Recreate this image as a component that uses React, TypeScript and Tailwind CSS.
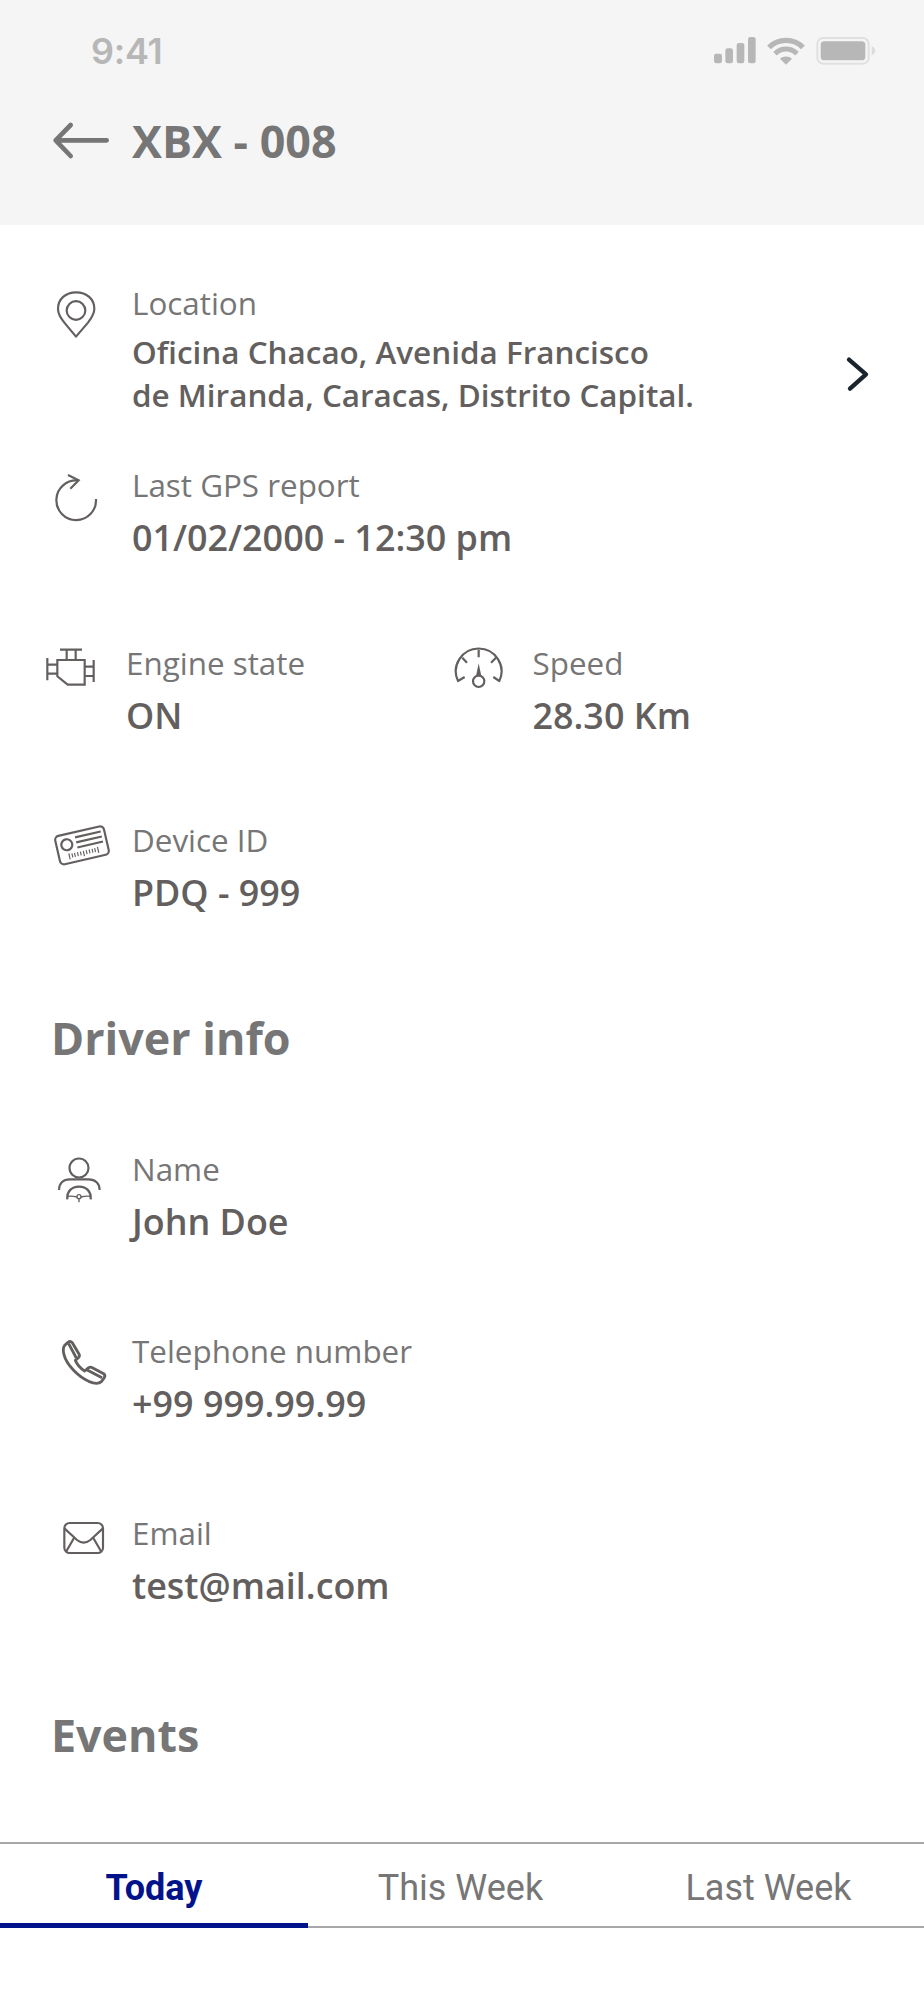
import React, { useState } from 'react';

type IconProps = { className?: string };

/* ---------- Icons ---------- */

const SignalIcon = () => (
  <svg className="w-[42px] h-[27px]" viewBox="0 0 126 81" fill="#b7b7b7">
    <rect x="0" y="50" width="24" height="29" rx="7" />
    <rect x="34" y="34" width="23" height="45" rx="7" />
    <rect x="68" y="18" width="23" height="61" rx="7" />
    <rect x="102" y="0" width="23" height="79" rx="7" />
  </svg>
);

const WifiIcon = () => (
  <svg className="w-[38px] h-[28px] ml-[11px]" viewBox="0 0 114 84" fill="none" stroke="#b7b7b7">
    <path d="M6 31C34 3 80 3 108 31" strokeWidth="16" />
    <path d="M24 50C43 31 71 31 90 50" strokeWidth="15" />
    <path d="M57 83L39 65C49 56 65 56 75 65Z" fill="#b7b7b7" stroke="none" />
  </svg>
);

const BatteryIcon = () => (
  <svg className="w-[60px] h-[28px] ml-[11px]" viewBox="0 0 180 84" fill="none">
    <rect x="4" y="3" width="154" height="77" rx="18" stroke="#e0e0e0" strokeWidth="6" />
    <rect x="14" y="13" width="134" height="57" rx="11" fill="#b7b7b7" />
    <path d="M167 28C174 31 178 36 178 41S174 52 167 55Z" fill="#dcdcdc" />
  </svg>
);

const BackIcon = () => (
  <svg className="w-[61px] h-[40px]" viewBox="0 0 183 120" fill="none" stroke="#767676" strokeWidth="14" strokeLinecap="round" strokeLinejoin="round">
    <path d="M176 58H23M68 12L23 58L68 105" />
  </svg>
);

const PinIcon = ({ className }: IconProps) => (
  <svg className={className} viewBox="0 0 135 162" fill="none" stroke="#635f5e" strokeWidth="6.5">
    <path d="M66 146L31 104C18 88 12 77 12 63C12 33 35 13 66.5 13S121 33 121 63C121 77 114 88 102 104Z" strokeLinejoin="round" />
    <circle cx="66" cy="67.500" r="28" />
  </svg>
);

const ReloadIcon = ({ className }: IconProps) => (
  <svg className={className} viewBox="0 0 135 162" fill="none" stroke="#635f5e" strokeWidth="6.5">
    <path d="M126 84A59.500 59.500 0 1 1 73 28.500" />
    <path d="M42 12L74 28L49 53" />
  </svg>
);

const EngineIcon = ({ className }: IconProps) => (
  <svg className={className} viewBox="0 0 162 135" fill="none" stroke="#635f5e" strokeWidth="6.5">
    <path d="M40 45H122V119H71L40 94Z" />
    <path d="M48 14H114M68 14V45M95 14V45" />
    <path d="M10 39V106M10 59H40M10 86H40" />
    <path d="M149 45V111M122 65H149M122 93H149" />
  </svg>
);

const SpeedIcon = ({ className }: IconProps) => (
  <svg className={className} viewBox="0 0 162 144" fill="none" stroke="#635f5e" strokeWidth="6.5">
    <path d="M38 96L18 108A68.500 68.500 0 1 1 142 108L124 96" strokeLinejoin="round" />
    <path d="M80 14V37M31 38L45 53M132 38L117 53" />
    <circle cx="80" cy="109" r="17" />
    <path d="M80 55L88 93H72Z" fill="#635f5e" stroke="none" />
  </svg>
);

const DeviceIcon = ({ className }: IconProps) => (
  <svg className={className} viewBox="0 0 180 144" fill="none" stroke="#635f5e" strokeWidth="6.5">
    <g transform="translate(90 70) rotate(-13)">
      <rect x="-75" y="-43.500" width="150" height="87" rx="12" />
      <circle cx="-44" cy="-12" r="16.500" />
      <path d="M-15 -28H64M-15 -12.500H64M-15 3H64" />
      <path d="M-44 15V33M-35 17V29M-27 17V29M-18 17V29M-9 17V29M0 17V33M9 17V29M18 17V29M27 17V29M35 17V29M44 15V33" strokeWidth="3.500" />
    </g>
  </svg>
);

const DriverIcon = ({ className }: IconProps) => (
  <svg className={className} viewBox="0 0 162 162" fill="none" stroke="#635f5e" strokeWidth="6.5">
    <circle cx="75" cy="39" r="28.500" />
    <path d="M15 105C15 86 27 73 48 73H104C124 73 137 86 137 105" />
    <path d="M40 133C38 110 52 95 75 95S112 110 110 133" strokeWidth="7" />
    <path d="M40 124Q54 122 69 126M110 124Q96 122 81 126M75 131V142" strokeWidth="4" />
    <circle cx="75" cy="125" r="6" strokeWidth="4" />
  </svg>
);

const PhoneIcon = ({ className }: IconProps) => (
  <svg className={className} viewBox="0 0 153 153" fill="none" stroke="#635f5e" strokeWidth="8.5" strokeLinejoin="round">
    <path d="M14 22L24 13Q31 8 37 14L57 48Q60 54 56 58L46 67C52 81 63 92 74 99L86 89Q91 86 97 89L131 107Q137 112 133 119L124 131C116 138 100 136 86 130C56 116 20 82 12 50C9 38 9 28 14 22Z" />
    <path d="M26 17L49 60M80 95L126 119" />
  </svg>
);

const MailIcon = ({ className }: IconProps) => (
  <svg className={className} viewBox="0 0 135 108" fill="none" stroke="#635f5e" strokeWidth="6.5">
    <rect x="10" y="9" width="116" height="90" rx="16" />
    <path d="M11 26L48 60Q68 76 88 60L125 26" />
    <path d="M39 54L16 94M97 54L120 94" />
  </svg>
);

const ChevronIcon = () => (
  <svg className="w-[26px] h-[38px]" viewBox="0 0 78 114" fill="none" stroke="#1a242c" strokeWidth="13" strokeLinecap="round" strokeLinejoin="round">
    <path d="M15 14L66 58L18 101" />
  </svg>
);

/* ---------- Rows ---------- */

type InfoRowProps = {
  label: string;
  value: string;
  icon: React.ReactNode;
  iconWidth?: string;
  className?: string;
};

const InfoRow = ({ label, value, icon, iconWidth = 'w-[132px]', className = '' }: InfoRowProps) => (
  <div className={`flex items-start ${className}`}>
    <div className={`shrink-0 ${iconWidth}`}>{icon}</div>
    <div>
      <p className="text-[31.400px] leading-[44px] text-[#767676]">{label}</p>
      <p className="mt-[6px] text-[35.900px] leading-[50px] font-semibold text-[#635f5e] whitespace-nowrap">{value}</p>
    </div>
  </div>
);

const TABS = ['Today', 'This Week', 'Last Week'];

export default function App() {
  const [activeTab, setActiveTab] = useState('Today');

  return (
    <div className="w-[924px] h-[2000px] overflow-hidden bg-white font-['Open_Sans',sans-serif]">
      <header className="h-[225px] bg-[#f5f5f5]">
        <div className="flex h-[101px] items-center justify-between pl-[91px] pr-[48px]">
          <span className="font-['Inter',sans-serif] text-[36px] leading-[44px] font-semibold tracking-[-0.3px] text-[#b7b7b7]">9:41</span>
          <div className="flex items-center">
            <SignalIcon />
            <WifiIcon />
            <BatteryIcon />
          </div>
        </div>
        <div className="flex items-center pt-[10px] pl-[48px]">
          <BackIcon />
          <h1 className="ml-[23px] text-[44.850px] leading-[60px] font-bold text-[#767676]">XBX - 008</h1>
        </div>
      </header>

      <section className="h-[783px] pt-[56px]">
        <div className="flex h-[182px] items-start">
          <div className="w-[132px] shrink-0 pt-[7px] pl-[54px]">
            <PinIcon className="w-[45px] h-[54px]" />
          </div>
          <div className="w-[712px]">
            <p className="text-[31.400px] leading-[44px] text-[#767676]">Location</p>
            <p className="mt-[5px] text-[31.450px] leading-[43px] font-semibold text-[#635f5e]">
              Oficina Chacao, Avenida Francisco
              <br />
              de Miranda, Caracas, Distrito Capital.
            </p>
          </div>
          <button className="mt-[74px]" aria-label="Open location">
            <ChevronIcon />
          </button>
        </div>

        <InfoRow
          className="h-[178px]"
          label="Last GPS report"
          value="01/02/2000 - 12:30 pm"
          icon={<ReloadIcon className="mt-[8px] ml-[54px] w-[45px] h-[54px]" />}
        />

        <div className="flex h-[177px]">
          <InfoRow
            className="w-[452px]"
            iconWidth="w-[126px]"
            label="Engine state"
            value="ON"
            icon={<EngineIcon className="mt-[4px] ml-[44px] w-[54px] h-[45px]" />}
          />
          <InfoRow
            iconWidth="w-[80.500px]"
            label="Speed"
            value="28.30 Km"
            icon={<SpeedIcon className="mt-[4px] w-[54px] h-[48px]" />}
          />
        </div>

        <InfoRow
          label="Device ID"
          value="PDQ - 999"
          icon={<DeviceIcon className="mt-[4px] ml-[52px] w-[60px] h-[48px]" />}
        />
      </section>

      <section className="h-[697px]">
        <h2 className="h-[139px] pl-[51px] text-[44.850px] leading-[60px] font-bold text-[#767676]">Driver info</h2>
        <InfoRow
          className="h-[182px]"
          label="Name"
          value="John Doe"
          icon={<DriverIcon className="mt-[8px] ml-[54px] w-[54px] h-[54px]" />}
        />
        <InfoRow
          className="h-[182px]"
          label="Telephone number"
          value="+99 999.99.99"
          icon={<PhoneIcon className="mt-[9px] ml-[60px] w-[51px] h-[51px]" />}
        />
        <InfoRow
          label="Email"
          value="test@mail.com"
          icon={<MailIcon className="mt-[9px] ml-[61px] w-[45px] h-[36px]" />}
        />
      </section>

      <section>
        <h2 className="h-[137px] pl-[51px] text-[44.850px] leading-[60px] font-bold text-[#767676]">Events</h2>
        <div className="grid h-[86px] grid-cols-3 border-t-2 border-[#a8a8a8] font-['Roboto',sans-serif] text-[36px]">
          {TABS.map((tab) => (
            <button
              key={tab}
              onClick={() => setActiveTab(tab)}
              className={
                tab === activeTab
                  ? 'border-b-[5px] border-[#00138a] pt-[8px] font-bold text-[#00138a]'
                  : 'border-b-2 border-[#a8a8a8] pt-[5px] pr-[3px] text-[#767676]'
              }
            >
              {tab}
            </button>
          ))}
        </div>
      </section>
    </div>
  );
}
